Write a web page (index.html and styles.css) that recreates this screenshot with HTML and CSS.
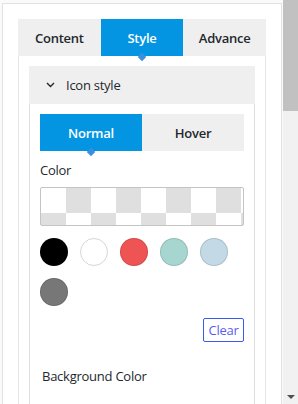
FILE: index.html
```html
<!DOCTYPE html>
<html lang="en">
<head>
  <meta charset="UTF-8" />
  <meta name="viewport" content="width=device-width, initial-scale=1.0"/>
  <title>Icon Style Panel</title>
  <link rel="stylesheet" href="styles.css">
</head>
<body>
  <div class="main">
    <div class="frame">
      <div class="tabs">
        <div class="tab">Content</div>
        <div class="tab active">Style</div>
        <div class="tab">Advance</div>
      </div>

      <div class="panel">
        <div class="acc">
          <div class="acc-head">
            <svg class="chev" width="9" height="6" viewBox="0 0 9 6">
              <path d="M1 1 L4.5 4.5 L8 1" fill="none" stroke="#23282d" stroke-width="1.4"/>
            </svg>
            Icon style
          </div>
          <div class="acc-body">
            <div class="subtabs">
              <div class="subtab active">Normal</div>
              <div class="subtab">Hover</div>
            </div>

            <div class="label">Color</div>
            <div class="checker"></div>

            <div class="swatches">
              <span class="sw black"></span>
              <span class="sw white"></span>
              <span class="sw red"></span>
              <span class="sw teal"></span>
              <span class="sw sky"></span>
              <span class="sw grey"></span>
            </div>

            <div class="clear-row">
              <button class="clear">Clear</button>
            </div>

            <div class="label bg-label">Background Color</div>
          </div>
        </div>
      </div>
    </div>
  </div>

  <!-- fake scrollbar -->
  <div class="scrollbar">
    <div class="thumb"></div>
    <div class="arrow"></div>
  </div>
</body>
</html>
```

FILE: styles.css
```css
html, body {
  margin: 0;
  height: 404px;
  overflow: hidden;
}
body {
  display: flex;
  background: #fafafa;
  font-family: "Open Sans", "Noto Sans", sans-serif;
  font-size: 13px;
  letter-spacing: -0.25px;
  color: #23282d;
}
.main {
  flex: 1;
  display: flex;
  padding: 3px 1px 0 2px;
}
.frame {
  flex: 1;
  display: flex;
  flex-direction: column;
  background: #fff;
  border: 1px solid #e2e2e2;
  border-bottom: none;
  padding: 15px 15px 0 15px;
}
.tabs {
  display: grid;
  grid-template-columns: 1fr 1fr 1fr;
  background: #efefef;
  height: 37px;
}
.tab {
  position: relative;
  display: flex;
  align-items: center;
  justify-content: center;
  font-weight: 600;
}
.tab.active, .subtab.active {
  background: #0395e2;
  color: #fff;
}
.tab.active::after, .subtab.active::after {
  content: "";
  position: absolute;
  left: 50%;
  bottom: -4px;
  width: 6px;
  height: 6px;
  margin-left: -3px;
  background: #3b8fe3;
  transform: rotate(45deg);
}
.panel {
  flex: 1;
  display: flex;
  border-left: 1px solid #e5e5e5;
  border-right: 1px solid #e5e5e5;
  padding: 10px 10px 0 10px;
}
.acc {
  flex: 1;
  display: flex;
  flex-direction: column;
}
.acc-head {
  height: 38px;
  background: #efefef;
  display: flex;
  align-items: center;
  padding-left: 17px;
}
.chev {
  margin-right: 11px;
}
.acc-body {
  flex: 1;
  border: 1px solid #dedede;
  border-top: none;
  border-bottom: none;
  padding: 10px;
}
.subtabs {
  display: grid;
  grid-template-columns: 1fr 1fr;
  background: #efefef;
  height: 37px;
}
.subtab {
  position: relative;
  display: flex;
  align-items: center;
  justify-content: center;
  font-weight: 600;
}
.label {
  margin-top: 10px;
  line-height: 18px;
}
.checker {
  margin-top: 8px;
  height: 37px;
  border: 1px solid #c4c4c4;
  border-radius: 2px;
  background-color: #fff;
  background-image: conic-gradient(#dfdfdf 0 25%, #fff 0 50%, #dfdfdf 0 75%, #fff 0);
  background-size: 50px 50px;
}
.swatches {
  margin-top: 12px;
  display: flex;
  flex-wrap: wrap;
  gap: 12px;
}
.sw {
  width: 28px;
  height: 28px;
  border-radius: 50%;
  box-sizing: border-box;
  border: 1px solid rgba(0, 0, 0, 0.12);
}
.black { background: #000; }
.white { background: #fff; border-color: #d6d6d6; }
.red { background: #ef5454; }
.teal { background: #a7d6d1; }
.sky { background: #c3d9e6; }
.grey { background: #777; }
.clear-row {
  display: flex;
  justify-content: flex-end;
  margin-top: 12px;
}
.clear {
  width: 41px;
  height: 24px;
  padding: 0;
  background: #fff;
  border: 1px solid #3a5ae8;
  border-radius: 2px;
  color: #5b5bf0;
  font-family: "Open Sans", "Noto Sans", sans-serif;
  font-size: 13px;
  letter-spacing: -0.25px;
}
.bg-label {
  margin-top: 25px;
  padding-left: 2px;
}
.scrollbar {
  width: 15px;
  background: #f1f1f1;
  display: flex;
  flex-direction: column;
  justify-content: space-between;
  align-items: center;
}
.thumb {
  width: 15px;
  height: 111px;
  background: #c1c1c1;
}
.arrow {
  width: 0;
  height: 0;
  border-left: 4px solid transparent;
  border-right: 4px solid transparent;
  border-top: 4px solid #505050;
  margin-bottom: 5px;
}
```
